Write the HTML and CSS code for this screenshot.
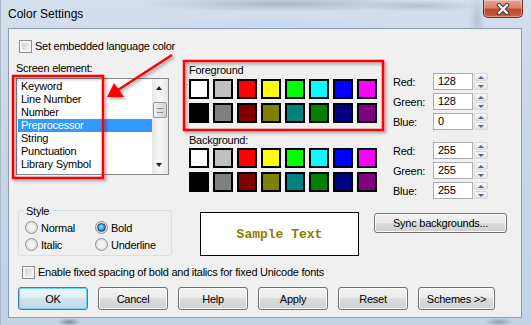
FILE: index.html
```html
<!DOCTYPE html>
<html lang="en">
<head>
  <meta charset="UTF-8" />
  <title>Color Settings</title>
  <link rel="stylesheet" href="styles.css">
</head>
<body>

  <div class="window">
    <div class="titlebar">
      <div class="title">Color Settings</div>
      <div class="close">
        <svg width="14" height="12" viewBox="0 0 14 12">
          <path d="M3 2 L11 10 M11 2 L3 10" stroke="#3b3b3b" stroke-width="4.4" stroke-linecap="round"/>
          <path d="M3 2 L11 10 M11 2 L3 10" stroke="#fff" stroke-width="2.4" stroke-linecap="round"/>
        </svg>
      </div>
    </div>

    <div class="client">
      <label class="check top-check"><span class="cb"></span>Set embedded language color</label>

      <div class="main">
        <div class="elements">
          <div class="label">Screen element:</div>
          <div class="listbox">
            <div class="items">
              <div class="item">Keyword</div>
              <div class="item">Line Number</div>
              <div class="item">Number</div>
              <div class="item selected">Preprocessor</div>
              <div class="item">String</div>
              <div class="item">Punctuation</div>
              <div class="item">Library Symbol</div>
            </div>
            <div class="scrollbar">
              <div class="arrow up"></div>
              <div class="thumb"><span></span></div>
              <div class="track"></div>
              <div class="arrow down"></div>
            </div>
          </div>
        </div>

        <div class="palettes">
          <div class="label">Foreground</div>
          <div class="swatches">
            <span class="sw white"></span><span class="sw silver"></span><span class="sw red"></span><span class="sw yellow"></span>
            <span class="sw lime"></span><span class="sw cyan"></span><span class="sw blue"></span><span class="sw magenta"></span>
            <span class="sw black"></span><span class="sw gray"></span><span class="sw maroon"></span><span class="sw olive"></span>
            <span class="sw teal"></span><span class="sw green"></span><span class="sw navy"></span><span class="sw purple"></span>
          </div>
          <div class="label bg-label">Background:</div>
          <div class="swatches bg">
            <span class="sw white"></span><span class="sw silver"></span><span class="sw red"></span><span class="sw yellow"></span>
            <span class="sw lime"></span><span class="sw cyan"></span><span class="sw blue"></span><span class="sw magenta"></span>
            <span class="sw black"></span><span class="sw gray"></span><span class="sw maroon"></span><span class="sw olive"></span>
            <span class="sw teal"></span><span class="sw green"></span><span class="sw navy"></span><span class="sw purple"></span>
          </div>
        </div>

        <div class="rgb">
          <div class="rgb-group">
            <div class="rgb-row"><span class="rgb-label">Red:</span><span class="field">128</span><span class="spin"><i class="s-up"></i><i class="s-down"></i></span></div>
            <div class="rgb-row"><span class="rgb-label">Green:</span><span class="field">128</span><span class="spin"><i class="s-up"></i><i class="s-down"></i></span></div>
            <div class="rgb-row"><span class="rgb-label">Blue:</span><span class="field">0</span><span class="spin"><i class="s-up"></i><i class="s-down"></i></span></div>
          </div>
          <div class="rgb-group second">
            <div class="rgb-row"><span class="rgb-label">Red:</span><span class="field">255</span><span class="spin"><i class="s-up"></i><i class="s-down"></i></span></div>
            <div class="rgb-row"><span class="rgb-label">Green:</span><span class="field">255</span><span class="spin"><i class="s-up"></i><i class="s-down"></i></span></div>
            <div class="rgb-row"><span class="rgb-label">Blue:</span><span class="field">255</span><span class="spin"><i class="s-up"></i><i class="s-down"></i></span></div>
          </div>
        </div>
      </div>

      <div class="lower">
        <div class="style-box">
          <span class="legend">Style</span>
          <div class="radios">
            <label class="radio"><span class="rb"></span>Normal</label>
            <label class="radio"><span class="rb on"></span>Bold</label>
            <label class="radio"><span class="rb"></span>Italic</label>
            <label class="radio"><span class="rb"></span>Underline</label>
          </div>
        </div>
        <div class="sample">Sample Text</div>
        <div class="btn sync">Sync backgrounds...</div>
      </div>

      <label class="check fixed-check"><span class="cb"></span>Enable fixed spacing of bold and italics for fixed Unicode fonts</label>

      <div class="buttons">
        <div class="btn default">OK</div>
        <div class="btn">Cancel</div>
        <div class="btn">Help</div>
        <div class="btn">Apply</div>
        <div class="btn">Reset</div>
        <div class="btn schemes">Schemes &gt;&gt;</div>
      </div>
    </div>
  </div>

  <!-- red annotation marks -->
  <svg class="marks" width="531" height="325" viewBox="0 0 531 325">
    <defs>
      <filter id="shade" x="-20%" y="-20%" width="140%" height="140%">
        <feDropShadow dx="2" dy="2" stdDeviation="1.5" flood-color="#000" flood-opacity="0.35"/>
      </filter>
    </defs>
    <g filter="url(#shade)" fill="none" stroke="#ff0000" stroke-width="2.5">
      <rect x="13" y="76" width="90" height="102"/>
      <rect x="184" y="61" width="199" height="69"/>
      <line x1="172" y1="55" x2="118" y2="90"/>
      <polygon points="107,97 114,83 124,97" fill="#ff0000" stroke="none"/>
    </g>
  </svg>

</body>
</html>
```

FILE: styles.css
```css
* {
  box-sizing: border-box;
}

body {
  margin: 0;
  width: 531px;
  height: 325px;
  overflow: hidden;
  position: relative;
  font-family: "Liberation Sans", Arial, sans-serif;
  font-size: 11px;
  letter-spacing: -0.25px;
  color: #000;
}

/* Aero frame */
.window {
  width: 531px;
  height: 325px;
  padding: 0 9px 7px 7px;
  display: flex;
  flex-direction: column;
  background:
    radial-gradient(ellipse 120px 6px at 270px 25px, rgba(190, 220, 250, 0.9), transparent),
    radial-gradient(ellipse 140px 8px at 280px 4px, rgba(120, 135, 160, 0.45), transparent),
    radial-gradient(ellipse 60px 6px at 420px 6px, rgba(120, 135, 160, 0.35), transparent),
    radial-gradient(ellipse 8px 30px at 476px 20px, rgba(130, 150, 175, 0.35), transparent),
    radial-gradient(ellipse 12px 4px at 68px 322px, rgba(60, 70, 90, 0.5), transparent),
    radial-gradient(ellipse 14px 4px at 498px 322px, rgba(60, 70, 90, 0.4), transparent),
    linear-gradient(to bottom, #d5dfec, #c9d6e6 40%, #c4d3e5);
  border-left: 1px solid #a9b6c7;
}

.titlebar {
  height: 28px;
  display: flex;
  justify-content: space-between;
  align-items: flex-start;
}

.title {
  font-size: 12px;
  letter-spacing: 0;
  line-height: 15px;
  margin: 7px 0 0 0;
}

.close {
  width: 40px;
  height: 18px;
  margin-right: -1px;
  display: flex;
  align-items: center;
  justify-content: center;
  border: 1px solid #6e2a20;
  border-top: none;
  border-radius: 0 0 5px 5px;
  background: linear-gradient(to bottom, #e6a895, #d98068 45%, #c5462d 55%, #c85b41);
  box-shadow: inset 0 0 0 1px rgba(255, 255, 255, 0.35);
}

.client {
  flex: 1;
  background: #f0f0f0;
  border: 1px solid #8d9db0;
}

/* checkboxes */
.check {
  display: flex;
  align-items: center;
  height: 13px;
  line-height: 13px;
  gap: 3px;
}

.cb {
  width: 13px;
  height: 13px;
  border: 1px solid #8f8f8f;
  background: linear-gradient(135deg, #c9ccd1, #f7f7f7);
  box-shadow: inset 0 0 0 2px #f4f4f4;
}

.top-check {
  margin: 11px 0 0 10px;
}

.fixed-check {
  margin: 10px 0 0 13px;
}

/* upper section */
.main {
  display: flex;
  height: 145px;
  margin-top: 9px;
}

.label {
  line-height: 13px;
}

.elements {
  margin-left: 7px;
  width: 153px;
}

.listbox {
  margin-top: 3px;
  height: 97px;
  border: 1px solid #828790;
  background: #fff;
  display: flex;
}

.items {
  flex: 1;
  padding: 1px 0 0 1px;
}

.item {
  height: 13px;
  line-height: 13px;
  padding-left: 3px;
}

.item.selected {
  background: #3399ff;
  color: #fff;
}

.scrollbar {
  width: 16px;
  display: flex;
  flex-direction: column;
  background: linear-gradient(to right, #e6e6e6, #f4f4f4 40%, #f4f4f4 60%, #e6e6e6);
}

.arrow {
  height: 17px;
  position: relative;
}

.arrow::after {
  content: "";
  position: absolute;
  left: 4px;
  border-left: 3.5px solid transparent;
  border-right: 3.5px solid transparent;
}

.arrow.up::after {
  top: 7px;
  border-bottom: 4px solid #222;
}

.arrow.down::after {
  top: 6px;
  border-top: 4px solid #222;
}

.thumb {
  height: 16px;
  margin: 6px 1px 0;
  border: 1px solid #989898;
  border-radius: 2px;
  background: linear-gradient(to right, #f2f2f2, #e0e0e0 50%, #d2d2d2);
  display: flex;
  align-items: center;
  justify-content: center;
}

.thumb span {
  width: 6px;
  height: 5px;
  border-top: 1px solid #8a8a8a;
  border-bottom: 1px solid #8a8a8a;
}

.track {
  flex: 1;
}

/* colour palettes */
.palettes {
  margin-left: 20px;
  padding-top: 2px;
}

.swatches {
  display: grid;
  grid-template-columns: repeat(8, 20px);
  grid-auto-rows: 20px;
  gap: 4px;
  margin-top: 2px;
}

.swatches.bg {
  margin-top: 1px;
}

.bg-label {
  margin-top: 11px;
}

.sw {
  border: 2px solid #000;
}

.white { background: #ffffff; }
.silver { background: #c0c0c0; }
.red { background: #ff0000; }
.yellow { background: #ffff00; }
.lime { background: #00ff00; }
.cyan { background: #00ffff; }
.blue { background: #0000ff; }
.magenta { background: #ff00ff; }
.black { background: #000000; }
.gray { background: #808080; }
.maroon { background: #800000; }
.olive { background: #808000; }
.teal { background: #008080; }
.green { background: #008000; }
.navy { background: #000080; }
.purple { background: #800080; }

/* RGB fields */
.rgb {
  margin-left: 16px;
  padding-top: 11px;
}

.rgb-group {
  display: flex;
  flex-direction: column;
  gap: 3px;
}

.rgb-group.second {
  margin-top: 12px;
}

.rgb-row {
  display: flex;
  align-items: center;
  height: 17px;
}

.rgb-label {
  width: 40px;
}

.field {
  width: 40px;
  height: 17px;
  line-height: 15px;
  padding-left: 4px;
  border: 1px solid #abadb3;
  background: #fff;
}

.spin {
  width: 14px;
  height: 17px;
  margin-left: 1px;
  display: flex;
  flex-direction: column;
  gap: 1px;
}

.spin i {
  flex: 1;
  border: 1px solid #d8d8d8;
  border-radius: 2px;
  background: linear-gradient(#f8f8f8, #e4e4e4);
  position: relative;
}

.spin i::after {
  content: "";
  position: absolute;
  left: 3px;
  border-left: 3px solid transparent;
  border-right: 3px solid transparent;
}

.s-up::after {
  top: 2px;
  border-bottom: 3px solid #4e6690;
}

.s-down::after {
  top: 2px;
  border-top: 3px solid #4e6690;
}

/* lower section */
.lower {
  display: flex;
  align-items: flex-start;
  margin-top: 3px;
}

.style-box {
  margin-left: 9px;
  width: 154px;
  height: 46px;
  border: 1px solid #d5dfe5;
  border-radius: 3px;
}

.legend {
  display: block;
  width: fit-content;
  margin: -6px 0 0 5px;
  padding: 0 2px;
  line-height: 13px;
  background: #f0f0f0;
}

.radios {
  display: grid;
  grid-template-columns: 70px auto;
  row-gap: 4px;
  margin-top: 3px;
  padding-left: 6px;
}

.radio {
  display: flex;
  align-items: center;
  gap: 3px;
  height: 13px;
}

.rb {
  width: 13px;
  height: 13px;
  border: 1px solid #8f8f8f;
  border-radius: 50%;
  background: radial-gradient(circle at 50% 50%, #f4f4f4 30%, #d6d6d6 90%);
  display: flex;
  align-items: center;
  justify-content: center;
}

.rb.on::after {
  content: "";
  width: 7px;
  height: 7px;
  border-radius: 50%;
  border: 1px solid #1c4f7d;
  background: radial-gradient(circle at 45% 40%, #a8e4ff, #2b83c6 60%, #11508a);
}

.sample {
  margin: 2px 0 0 28px;
  width: 159px;
  height: 44px;
  border: 1px solid #000;
  background: #fff;
  display: flex;
  align-items: center;
  justify-content: center;
  font-family: "Liberation Mono", "Courier New", monospace;
  font-weight: bold;
  font-size: 13px;
  letter-spacing: 0;
  color: #8a7f00;
}

/* buttons */
.btn {
  height: 23px;
  width: 70px;
  display: flex;
  align-items: center;
  justify-content: center;
  border: 1px solid #707070;
  border-radius: 3px;
  background: linear-gradient(#f2f2f2, #ebebeb 50%, #dddddd 50%, #cfcfcf);
  box-shadow: inset 0 0 0 1px #fcfcfc;
}

.btn.default {
  border-color: #3c7fb1;
  background: linear-gradient(#eef5f9, #e0ecf3 50%, #d0e2ec 50%, #c2d8e5);
  box-shadow: inset 0 0 0 1px #6fd3f3;
}

.btn.sync {
  margin: 3px 0 0 15px;
  width: 133px;
  height: 20px;
}

.btn.schemes {
  width: 77px;
}

.buttons {
  display: flex;
  gap: 10px;
  margin: 8px 0 0 9px;
}

/* annotation overlay */
.marks {
  position: absolute;
  top: 0;
  left: 0;
  pointer-events: none;
}
```
